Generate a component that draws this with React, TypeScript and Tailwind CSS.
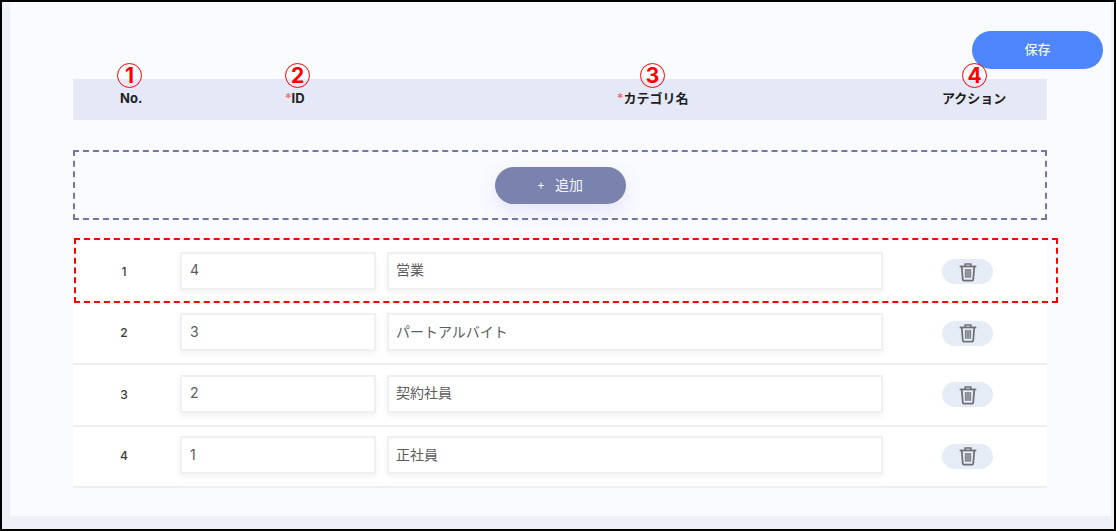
const font = { fontFamily: '"Inter", "Noto Sans CJK JP", sans-serif' };

const rows = [
  { no: 1, id: '4', name: '営業' },
  { no: 2, id: '3', name: 'パートアルバイト' },
  { no: 3, id: '2', name: '契約社員' },
  { no: 4, id: '1', name: '正社員' },
];

function TrashIcon() {
  return (
    <svg width="20" height="20" viewBox="0 0 18 18" fill="none" stroke="#6d7177">
      <path d="M1.5 4h15" strokeWidth="1.6" />
      <path d="M6.5 3.8V1.8h5v2" strokeWidth="1.5" />
      <path d="M3.4 4.5l.9 11.2c0 .6.4 1 1 1h7.4c.6 0 1-.4 1-1l.9-11.2" strokeWidth="1.6" />
      <path d="M6.2 6.3h5.6v7.9H6.2z" fill="#7d8187" stroke="none" />
      <path d="M7.6 6.3v7.9M9 6.3v7.9M10.4 6.3v7.9" stroke="#b9bcc2" strokeWidth=".5" />
    </svg>
  );
}

function Mark({ n, left }: { n: string; left: string }) {
  return (
    <span className={`absolute top-[61px] ${left} flex h-[25px] w-[25px] items-center justify-center rounded-full border border-[#ff0000] text-[21px] leading-none font-bold text-[#ff0000]`}>
      {n}
    </span>
  );
}

function Row({ no, id, name }: { no: number; id: string; name: string }) {
  return (
    <div className="flex h-[61.5px] items-center border-b-2 border-[#eeeff2] bg-white pb-[2px]">
      <div className="w-[107px] pt-[2px] pr-[5px] text-center text-[12px] font-medium text-[#3a3a3a]">{no}</div>
      <div className="flex h-[38px] w-[196px] items-center border-2 border-[#f0f0f0] bg-white pb-[2px] pl-[8px] text-[14px] text-[#5c5c5c] shadow-[0_3px_6px_rgba(0,0,0,0.05)]">
        {id}
      </div>
      <div className="ml-[11px] flex h-[38px] w-[496px] items-center border-2 border-[#f0f0f0] bg-white pb-[2px] pl-[7px] text-[14px] text-[#5c5c5c] shadow-[0_3px_6px_rgba(0,0,0,0.05)]">
        {name}
      </div>
      <div className="mt-[2px] ml-[59px] flex h-[25px] w-[51px] items-center justify-center rounded-full bg-[#e6ecf6]">
        <TrashIcon />
      </div>
    </div>
  );
}

export default function App() {
  return (
    <div className="relative h-[531px] w-[1116px] overflow-hidden border-x-2 border-y-2 border-black bg-[#f0f1f8]" style={font}>
      <div className="ml-[8px] mr-[3px] h-[514px] bg-[#fafbfe] pt-[29px]">
        <div className="flex justify-end pr-[8px]">
          <button className="h-[38px] w-[131px] rounded-full bg-[#4d85fd] text-[13px] font-medium text-[#eef3ff]">保存</button>
        </div>

        <div className="ml-[63px] w-[974px]">
          <div className="mt-[10px] grid h-[41px] grid-cols-[212px_332px_325px_105px] items-center bg-[#e5e8f6] pb-[2px] text-[13px] font-bold text-[#1f1f1f]">
            <div className="pl-[47px]">No.</div>
            <div><span className="font-normal text-[#f0606a]">*</span>ID</div>
            <div><span className="font-normal text-[#f0606a]">*</span>カテゴリ名</div>
            <div>アクション</div>
          </div>

          <div className="mt-[30px] flex h-[70px] items-center justify-center border-2 border-dashed border-[#6f78a8]">
            <button className="flex h-[37px] w-[131px] items-center justify-center gap-[10px] rounded-full bg-[#7a83ae] pb-[1px] text-[14px] text-[#f2f3f9] shadow-[0_8px_20px_rgba(130,110,240,0.16)]">
              <span className="text-[12px]">+</span>
              <span>追加</span>
            </button>
          </div>

          <div className="mt-[22px]">
            {rows.map((r) => (
              <Row key={r.no} no={r.no} id={r.id} name={r.name} />
            ))}
          </div>
        </div>
      </div>

      {/* annotations drawn over the screen */}
      <Mark n="1" left="left-[115px]" />
      <Mark n="2" left="left-[283px]" />
      <Mark n="3" left="left-[638px]" />
      <Mark n="4" left="left-[960px]" />
      <div className="absolute left-[72px] top-[236px] h-[65px] w-[984px] border-2 border-dashed border-[#ff0000]" />
    </div>
  );
}
